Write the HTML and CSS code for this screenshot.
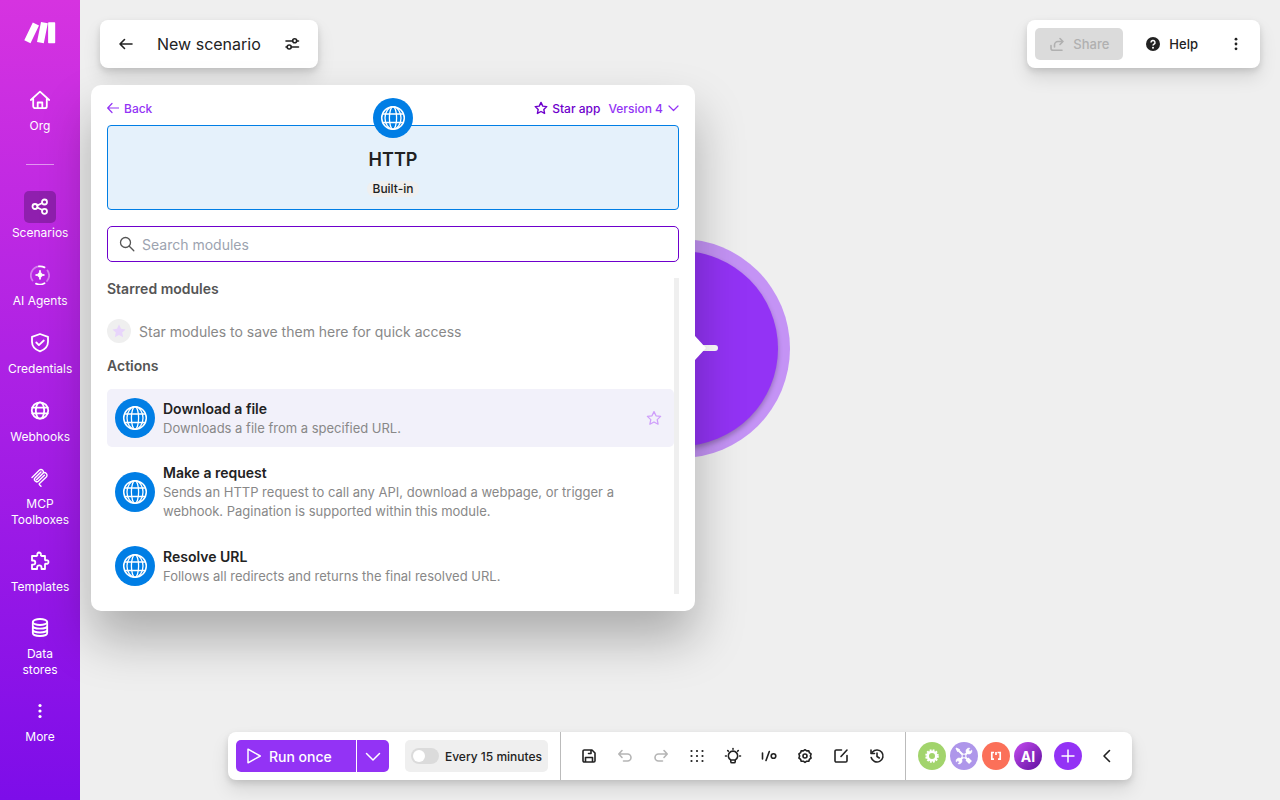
FILE: index.html
```
<!DOCTYPE html>
<html lang="en">
<head>
    <meta charset="UTF-8">
    <meta name="viewport" content="width=device-width, initial-scale=1.0">
    <title>New scenario</title>
    <link rel="stylesheet" href="styles.css">
</head>
<body>
    <!-- shared icons -->
    <svg class="sprite" aria-hidden="true">
        <symbol id="globe" viewBox="0 0 40 40">
            <circle cx="20" cy="20" r="20" fill="#007ee5"/>
            <g fill="none" stroke="#fff" stroke-width="1.3">
                <circle cx="20" cy="20" r="11.3" stroke-width="1.5"/>
                <ellipse cx="20" cy="20" rx="8" ry="11.3"/>
                <ellipse cx="20" cy="20" rx="3.6" ry="11.3"/>
                <path d="M10 16h20M10 24.500h20"/>
            </g>
        </symbol>
        <symbol id="star" viewBox="0 0 16 16">
            <path d="M8 1.6l2 4.2 4.6.6-3.4 3.2.9 4.6L8 12l-4.1 2.2.9-4.6L1.4 6.4 6 5.8z" stroke-linejoin="round"/>
        </symbol>
        <symbol id="dots" viewBox="0 0 16 16">
            <g fill="currentColor" stroke="none"><circle cx="8" cy="2.5" r="1.6"/><circle cx="8" cy="8" r="1.6"/><circle cx="8" cy="13.5" r="1.6"/></g>
        </symbol>
    </svg>

    <nav class="sidebar">
        <a class="logo" href="#" aria-label="Home">
            <svg width="32" height="24" viewBox="0 0 32 24" fill="#fff"><path d="M8.800 1.500L15 4.500 6.500 22.300.300 19.300zM17 1l6.800 1.300-4 20-6.800-1.300zM24.800 1.300h5.700a.7.700 0 0 1 .7.700v19.500a.7.700 0 0 1-.7.700h-5.700a.7.700 0 0 1-.7-.7V2a.7.700 0 0 1 .7-.7z"/></svg>
        </a>
        <a class="nav-item" href="#">
            <span class="nav-icon"><svg class="icon" width="20" height="20" viewBox="0 0 20 20"><path d="M.8 10L10 1.700l9.200 8.300M3.200 8.500v7.700a2 2 0 0 0 2 2h9.600a2 2 0 0 0 2-2V8.500M7.700 18v-5.500h4.600V18"/></svg></span>
            Org
        </a>
        <hr class="nav-line">
        <div class="nav-group">
            <a class="nav-item active" href="#">
                <span class="nav-icon"><svg class="icon" width="18" height="18" viewBox="0 0 18 18"><circle cx="4" cy="8.500" r="2.500"/><circle cx="13.500" cy="4" r="2.500"/><circle cx="13.500" cy="13.300" r="2.500"/><path d="M6.300 7.500l5-2.500M6.300 9.500l5 2.500"/></svg></span>
                Scenarios
            </a>
            <a class="nav-item" href="#">
                <span class="nav-icon"><svg class="icon" width="20" height="20" viewBox="0 0 20 20"><path d="M14.500 2.400A9 9 0 0 0 9 1.400M6 18.600a9 9 0 0 0 8.500-.4"/><path d="M9 1.400A9 9 0 0 0 2.500 15.500M17 16A9 9 0 0 0 17.500 5.500" opacity=".4"/><path d="M10 5.500c.6 2.900 1.600 3.900 4.500 4.500-2.900.6-3.900 1.600-4.500 4.500-.6-2.900-1.600-3.900-4.500-4.500 2.900-.6 3.900-1.600 4.500-4.500z" fill="#fff" stroke-width="1"/></svg></span>
                AI Agents
            </a>
            <a class="nav-item" href="#">
                <span class="nav-icon"><svg class="icon" width="20" height="20" viewBox="0 0 20 20"><path d="M10 1l8 2.800v5c0 4.400-3.200 7.900-8 9.600-4.800-1.700-8-5.200-8-9.600v-5zM6.300 9.500l2.600 2.600 4.900-4.600"/></svg></span>
                Credentials
            </a>
            <a class="nav-item" href="#">
                <span class="nav-icon"><svg class="icon" width="20" height="20" viewBox="0 0 20 20"><circle cx="10" cy="9.500" r="8.200"/><ellipse cx="10" cy="9.500" rx="4.200" ry="8.200"/><path d="M2.300 6.700h15.400M2.300 12.300h15.400"/></svg></span>
                Webhooks
            </a>
        </div>
        <div class="nav-group tight">
            <a class="nav-item" href="#">
                <span class="nav-icon"><svg class="icon thin" width="20" height="20" viewBox="0 0 20 20"><path d="M2 9.500l7.300-7.200a2.300 2.300 0 0 1 3.400 3.300L6.500 11.700M6.800 11.400l6-5.900a2.400 2.400 0 0 1 3.500 3.400L9.500 15.500c-.4.400-.4.800 0 1.200l1.500 1.500M11 3.900L5.200 9.700a2.300 2.300 0 0 0 3.400 3.400L14.400 7.300"/></svg></span>
                MCP Toolboxes
            </a>
            <a class="nav-item" href="#">
                <span class="nav-icon"><svg class="icon" width="20" height="20" viewBox="0 0 20 20"><path d="M2 5h4.500c.8 0 1-.5.800-1.200A1.900 1.900 0 0 1 9 1.500a1.900 1.900 0 0 1 1.900 2.300c-.2.700 0 1.200.8 1.200H15v3.500c0 .8.500 1 1.200.8A1.700 1.700 0 0 1 18.500 11a1.700 1.700 0 0 1-2.300 1.700c-.7-.2-1.200 0-1.200.8V18h-3.500v-1.500a2.200 2.200 0 0 0-4.400 0V18H2v-4.300h1.200a2.100 2.100 0 0 0 0-4.200H2z"/></svg></span>
                Templates
            </a>
            <a class="nav-item" href="#">
                <span class="nav-icon"><svg class="icon" width="20" height="20" viewBox="0 0 20 20"><ellipse cx="10" cy="4" rx="7.200" ry="3"/><path d="M2.800 4v11c0 1.700 3.200 3 7.200 3s7.200-1.300 7.200-3V4M2.800 7.700c0 1.700 3.200 3 7.200 3s7.200-1.300 7.200-3M2.800 11.500c0 1.700 3.200 3 7.200 3s7.200-1.300 7.200-3"/></svg></span>
                Data stores
            </a>
            <a class="nav-item" href="#">
                <span class="nav-icon"><svg width="16" height="16"><use href="#dots"/></svg></span>
                More
            </a>
        </div>
    </nav>

    <main class="canvas">
        <button class="add-module" aria-label="Add module"><span><svg width="76" height="76" viewBox="0 0 76 76" fill="none" stroke="#fff" stroke-width="6" stroke-linecap="round"><path d="M3 37h69M38 3v69"/></svg></span></button>

        <header class="top">
            <div class="bar title-bar">
                <button class="tool" aria-label="Go back"><svg class="icon" width="16" height="16" viewBox="0 0 16 16"><path d="M14 8H2M6.500 3.500L2 8l4.500 4.500"/></svg></button>
                <h1>New scenario</h1>
                <button class="tool" aria-label="Scenario options"><svg class="icon" width="16" height="16" viewBox="0 0 16 16"><path d="M2 5h6.500M13 5h1.500M2 11h1M7.500 11h7"/><circle cx="10.700" cy="4.800" r="2"/><circle cx="5.200" cy="11" r="2"/></svg></button>
            </div>
            <div class="bar">
                <button class="share" disabled><svg class="icon" width="16" height="16" viewBox="0 0 16 16"><path d="M5.500 11V9a3.500 3.500 0 0 1 3.500-3.500h5M11 2.500l3 3-3 3M2 9.500v2.800a2 2 0 0 0 2 2h9"/></svg>Share</button>
                <button class="help"><svg width="16" height="16" viewBox="0 0 16 16"><circle cx="8" cy="8" r="7" fill="#222"/><path d="M6 6.500a2 2 0 1 1 2.800 1.800c-.6.300-.8.500-.8 1.200" fill="none" stroke="#fff" stroke-width="1.500"/><circle cx="8" cy="11.700" r="1" fill="#fff"/></svg>Help</button>
                <button class="tool narrow" aria-label="More"><svg width="14" height="14"><use href="#dots"/></svg></button>
            </div>
        </header>

        <section class="panel">
            <div class="panel-top">
                <button class="link"><svg class="icon thin" width="12" height="12" viewBox="0 0 12 12"><path d="M11.500 6H1M5 1.500L.7 6 5 10.500"/></svg>Back</button>
                <button class="link star-app"><svg class="icon" width="14" height="14"><use href="#star"/></svg>Star app</button>
                <button class="link">Version 4<svg class="icon thin" width="12" height="12" viewBox="0 0 12 12"><path d="M2 4l4.500 4.500L11 4"/></svg></button>
            </div>
            <div class="app-card">
                <svg class="app-logo" width="40" height="40"><use href="#globe"/></svg>
                <h2>HTTP</h2>
                <span class="badge">Built-in</span>
            </div>
            <label class="search">
                <svg class="icon" width="16" height="16" viewBox="0 0 16 16"><circle cx="6.500" cy="6.500" r="5"/><path d="M10.300 10.300l4.500 4.500"/></svg>
                <input type="text" placeholder="Search modules" aria-label="Search modules">
            </label>
            <div class="modules">
                <h3>Starred modules</h3>
                <p class="empty"><span class="empty-star"><svg width="16" height="16"><use href="#star"/></svg></span>Star modules to save them here for quick access</p>
                <h3>Actions</h3>
                <ul>
                    <li class="selected">
                        <svg width="40" height="40"><use href="#globe"/></svg>
                        <div><h4>Download a file</h4><p>Downloads a file from a specified URL.</p></div>
                        <button class="star-btn" aria-label="Star module"><svg class="icon" width="16" height="16"><use href="#star"/></svg></button>
                    </li>
                    <li>
                        <svg width="40" height="40"><use href="#globe"/></svg>
                        <div><h4>Make a request</h4><p>Sends an HTTP request to call any API, download a webpage, or trigger a webhook. Pagination is supported within this module.</p></div>
                    </li>
                    <li>
                        <svg width="40" height="40"><use href="#globe"/></svg>
                        <div><h4>Resolve URL</h4><p>Follows all redirects and returns the final resolved URL.</p></div>
                    </li>
                </ul>
            </div>
        </section>

        <footer class="bar bottom">
            <div class="run-group">
                <button class="run"><svg class="icon" width="16" height="16" viewBox="0 0 16 16"><path d="M2 1.200v13.600L14.300 8z"/></svg>Run once</button>
                <button class="run-menu" aria-label="Run options"><svg class="icon" width="16" height="16" viewBox="0 0 16 16"><path d="M1.500 5.500L8 12l6.500-6.500"/></svg></button>
                <label class="schedule"><input type="checkbox">Every 15 minutes</label>
            </div>
            <div class="tools">
                <button class="tool" aria-label="Save"><svg class="icon" width="16" height="16" viewBox="0 0 16 16"><path d="M3.300 2H11l3 3v7.700a1.300 1.300 0 0 1-1.300 1.300H3.300A1.300 1.300 0 0 1 2 12.700V3.300A1.300 1.300 0 0 1 3.300 2zM4.500 14V9.500h7V14M10 2v3.500H7.500"/></svg></button>
                <button class="tool" aria-label="Undo" disabled><svg class="icon" width="16" height="16" viewBox="0 0 16 16"><path d="M2 6h8.500a3.500 3.500 0 0 1 0 7H6.500M5 2.500L1.800 6 5 9.500"/></svg></button>
                <button class="tool" aria-label="Redo" disabled><svg class="icon" width="16" height="16" viewBox="0 0 16 16"><path d="M14 6H5.500a3.500 3.500 0 0 0 0 7h4M11 2.500L14.200 6 11 9.500"/></svg></button>
                <button class="tool" aria-label="Align"><svg class="icon grid-dots" width="16" height="16" viewBox="0 0 16 16"><path d="M2.500 3h0M8 3h0M13.500 3h0M2.500 8h0M8 8h0M13.500 8h0M2.500 13h0M8 13h0M13.500 13h0"/></svg></button>
                <button class="tool" aria-label="Explain flow"><svg class="icon" width="18" height="18" viewBox="0 0 18 18"><path d="M6.800 13a4.700 4.700 0 1 1 4.400 0v1.800a1 1 0 0 1-1 1H7.800a1 1 0 0 1-1-1zM6.800 13h4.400M9 1.500v.8M3.700 3.500l.6.600M14.300 3.500l-.6.600M1.500 9h.9M15.600 9h.9"/></svg></button>
                <button class="tool" aria-label="Inputs and outputs"><svg class="icon" width="16" height="16" viewBox="0 0 16 16"><path d="M1.500 5v6M8.300 3.500L5 12.500"/><circle cx="12.500" cy="8" r="2.300"/></svg></button>
                <button class="tool" aria-label="Settings"><svg class="icon" width="16" height="16" viewBox="0 0 16 16"><path d="M8 1.700l1.700 1.200 2.100-.2.600 2 1.700 1.200-.7 2.100.7 2-1.700 1.300-.6 2-2.100-.1L8 14.400l-1.700-1.200-2.100.1-.6-2L1.900 10l.7-2-.7-2.100 1.700-1.200.6-2 2.100.2z"/><circle cx="8" cy="8" r="2"/></svg></button>
                <button class="tool" aria-label="Notes"><svg class="icon" width="16" height="16" viewBox="0 0 16 16"><path d="M8.500 2H3.300A1.300 1.300 0 0 0 2 3.300v9.400A1.300 1.300 0 0 0 3.300 14h9.400a1.300 1.300 0 0 0 1.300-1.300V7.500M8 8.500L14 2"/></svg></button>
                <button class="tool" aria-label="History"><svg class="icon" width="16" height="16" viewBox="0 0 16 16"><path d="M2.200 9.500A6 6 0 1 0 3.500 4M2 2v3.500h3.500M8 5v3.500l2.300 1.500"/></svg></button>
            </div>
            <div class="apps">
                <button class="app green" aria-label="Flow control"><svg width="28" height="28" viewBox="0 0 28 28" fill="none" stroke="#fff"><circle cx="14" cy="14" r="4.300" stroke-width="2.600"/><circle cx="14" cy="14" r="5.900" stroke-width="1.800" stroke-dasharray="1.850 1.240"/></svg></button>
                <button class="app lilac" aria-label="Tools"><svg width="28" height="28" viewBox="0 0 28 28" fill="none" stroke="#fff"><path d="M8 8l12 12M19.500 8.500L8.500 19.500" stroke-width="2"/><path d="M17 17l3.500 3.500" stroke-width="4"/><path d="M20 6.300a3 3 0 1 0 1.700 1.700L19.500 10 18 8.500zM8 21.700a3 3 0 1 0-1.700-1.700L8.500 18 10 19.500z" fill="#fff" stroke-width=".5"/><path d="M6 6l3.500 1.500-2 2z" fill="#fff" stroke-width="1"/><circle cx="14" cy="14" r="2" fill="#ae96ea" stroke-width="1"/></svg></button>
                <button class="app coral" aria-label="Text parser"><svg width="28" height="28" viewBox="0 0 28 28" fill="none" stroke="#fff" stroke-width="1.700"><path d="M12 10.500H9.800v6.700H12M15.500 10.500h2.700v6.700H16M14 10v3"/></svg></button>
                <button class="app ai">AI</button>
                <button class="app plus" aria-label="Add app"><svg width="16" height="16" viewBox="0 0 16 16" stroke="#fff" stroke-width="1.500"><path d="M8 1.500v13M1.500 8h13"/></svg></button>
                <button class="tool" aria-label="Collapse"><svg class="icon" width="16" height="16" viewBox="0 0 16 16"><path d="M10.500 2.500L5 8l5.500 5.500"/></svg></button>
            </div>
        </footer>
    </main>
</body>
</html>
```
FILE: styles.css
```
* {
    box-sizing: border-box;
}

body {
    margin: 0;
    min-height: 100vh;
    display: flex;
    font-family: Inter, "Liberation Sans", sans-serif;
    font-size: 13px;
    color: #222;
    background-color: #efefef;
}

h1, h2, h3, h4, p, ul {
    margin: 0;
    padding: 0;
}

ul {
    list-style: none;
}

button {
    display: flex;
    align-items: center;
    justify-content: center;
    padding: 0;
    border: none;
    background: none;
    color: inherit;
    font: inherit;
    cursor: pointer;
}

svg {
    flex-shrink: 0;
}

.sprite {
    position: absolute;
    width: 0;
    height: 0;
}

.icon {
    fill: none;
    stroke: currentColor;
    stroke-width: 1.6;
    stroke-linecap: round;
    stroke-linejoin: round;
}

.thin {
    stroke-width: 1.2;
}

/* sidebar */
.sidebar {
    width: 80px;
    flex-shrink: 0;
    padding-top: 21px;
    background: linear-gradient(#d633e0, #7d0de9);
}

.logo {
    display: flex;
    justify-content: center;
    height: 63px;
}

.nav-item {
    display: flex;
    flex-direction: column;
    align-items: center;
    gap: 2px;
    padding: 0 8px;
    color: #fff;
    font-size: 12px;
    line-height: 16px;
    text-align: center;
    text-decoration: none;
}

.nav-icon {
    display: flex;
    align-items: center;
    justify-content: center;
    width: 32px;
    height: 32px;
    border-radius: 5px;
}

.active .nav-icon {
    background-color: #8f1fae;
}

.sidebar .icon {
    stroke-width: 1.8;
}

.sidebar .thin {
    stroke-width: 1.4;
}

.nav-line {
    width: 28px;
    margin: 30px auto 26px;
    border: none;
    border-top: 1px solid rgba(255, 255, 255, 0.5);
}

.nav-group {
    display: grid;
    gap: 18px;
}

.tight {
    gap: 17px;
    margin-top: 17px;
}

/* canvas */
.canvas {
    position: relative;
    flex: 1;
    display: flex;
    flex-direction: column;
    justify-content: space-between;
    align-items: center;
    padding: 20px;
}

.top {
    display: flex;
    justify-content: space-between;
    width: 100%;
}

.bar {
    display: flex;
    align-items: center;
    height: 48px;
    padding: 8px;
    border-radius: 8px;
    background-color: #fff;
    box-shadow: 0 3px 6px rgba(0, 0, 0, 0.12), 0 10px 18px rgba(0, 0, 0, 0.1);
}

.tool {
    width: 36px;
    height: 32px;
}

.narrow {
    width: 32px;
}

.tool:disabled {
    color: #b5b5b5;
}

.title-bar h1 {
    padding: 0 13px;
    font-size: 16px;
    font-weight: 400;
}

.share,
.help {
    gap: 8px;
    height: 32px;
    font-weight: 500;
}

.share {
    width: 88px;
    border-radius: 5px;
    background-color: #dbdbdb;
    color: #b0b0b0;
}

.help {
    padding: 0 22px;
}

/* big round module in the middle */
.add-module {
    position: absolute;
    top: 239px;
    left: calc(50% - 109px);
    width: 219px;
    height: 219px;
    border-radius: 50%;
    background-color: #c493f5;
}

.add-module span {
    display: flex;
    align-items: center;
    justify-content: center;
    width: 195px;
    height: 195px;
    border-radius: 50%;
    background-color: #9333f5;
    box-shadow: 0 3px 5px rgba(0, 0, 0, 0.25);
}

/* module picker */
.panel {
    position: absolute;
    top: 85px;
    left: 11px;
    width: 604px;
    padding: 16px 16px 17px;
    border-radius: 10px;
    background-color: #fff;
    box-shadow: 0 28px 50px rgba(0, 0, 0, 0.28);
}

.panel::after {
    content: "";
    position: absolute;
    top: 251px;
    left: 100%;
    border: 12px solid transparent;
    border-left: 11px solid #fff;
    border-right: none;
}

.panel-top {
    display: flex;
    gap: 8px;
    height: 24px;
    align-items: flex-start;
}

.link {
    gap: 5px;
    height: 14px;
    color: #9333f5;
    font-size: 12px;
    font-weight: 500;
}

.star-app {
    gap: 4px;
    margin-left: auto;
    color: #6e00cc;
}

.link:last-child {
    gap: 4px;
}

.app-card {
    position: relative;
    display: flex;
    flex-direction: column;
    align-items: center;
    height: 85px;
    padding-top: 22px;
    border: 1px solid #007ee5;
    border-radius: 4px;
    background-color: #e5f1fb;
}

.app-logo {
    position: absolute;
    top: -28px;
}

.app-card h2 {
    font-size: 18px;
    font-weight: 600;
    line-height: 24px;
}

.badge {
    margin-top: 9px;
    padding: 0 6px;
    border-radius: 8px;
    background-color: #efefef;
    font-size: 12px;
    font-weight: 500;
    line-height: 16px;
}

.search {
    display: flex;
    align-items: center;
    gap: 7px;
    height: 36px;
    margin: 16px 0;
    padding: 0 11px;
    border: 1px solid #6e00cc;
    border-radius: 5px;
    color: #555;
}

.search .icon {
    stroke-width: 1.3;
}

.search input {
    flex: 1;
    border: none;
    outline: none;
    padding: 0;
    font: inherit;
    font-size: 14px;
}

.search input::placeholder {
    color: #9ca3af;
}

.modules {
    max-height: 316px;
    overflow: hidden;
    border-right: 5px solid #efefef;
}

.modules h3 {
    color: #555;
    font-size: 14px;
    font-weight: 600;
    line-height: 22px;
}

.empty {
    display: flex;
    align-items: center;
    gap: 8px;
    margin: 19px 0 12px;
    color: #888;
    font-size: 14px;
}

.empty-star {
    display: flex;
    align-items: center;
    justify-content: center;
    width: 24px;
    height: 24px;
    border-radius: 50%;
    background-color: #efefef;
    fill: #e8d5fb;
}

.modules ul {
    display: grid;
    gap: 7px;
    margin-top: 12px;
}

.modules li {
    display: flex;
    align-items: center;
    gap: 8px;
    padding: 9px 8px;
    border-radius: 5px;
}

.modules li div {
    flex: 1;
    max-width: 460px;
}

.modules .selected {
    background-color: #f2f1fa;
}

.modules h4 {
    font-size: 14px;
    font-weight: 600;
    line-height: 20px;
}

.modules li p {
    color: #888;
    line-height: 19px;
}

.star-btn {
    width: 24px;
    height: 24px;
    margin-left: auto;
    color: #cf9ffa;
}

.star-btn .icon {
    stroke-width: 1.3;
}

/* bottom toolbar */
.bottom {
    padding: 0;
}

.run-group,
.tools,
.apps {
    display: flex;
    align-items: center;
    height: 100%;
}

.run-group {
    padding: 0 12px 0 8px;
}

.run,
.run-menu {
    height: 32px;
    background-color: #9333f5;
    color: #fff;
}

.run {
    justify-content: flex-start;
    gap: 7px;
    width: 120px;
    padding-left: 10px;
    border-radius: 5px 0 0 5px;
    font-size: 14px;
    font-weight: 500;
}

.run-menu {
    width: 32px;
    margin-left: 1px;
    border-radius: 0 5px 5px 0;
}

.run-group .icon {
    stroke-width: 1.5;
}

.schedule {
    display: flex;
    align-items: center;
    gap: 6px;
    height: 32px;
    margin-left: 16px;
    padding: 0 6px;
    border-radius: 5px;
    background-color: #efefef;
    font-size: 12px;
    font-weight: 500;
}

.schedule input {
    appearance: none;
    display: flex;
    width: 28px;
    height: 16px;
    margin: 0;
    padding: 2px;
    border-radius: 8px;
    background-color: #dbdbdb;
}

.schedule input::before {
    content: "";
    width: 12px;
    height: 12px;
    border-radius: 50%;
    background-color: #fff;
}

.schedule input:checked {
    justify-content: flex-end;
    background-color: #9333f5;
}

.tools {
    padding: 0 10px;
    border-left: 1px solid #bbb;
    border-right: 1px solid #bbb;
}

.grid-dots {
    stroke-width: 2.2;
}

.apps {
    gap: 4px;
    padding: 0 7px 0 12px;
}

.app {
    width: 28px;
    height: 28px;
    border-radius: 50%;
}

.green {
    background-color: #a2d46c;
}

.lilac {
    background-color: #ae96ea;
}

.coral {
    background-color: #fb7059;
}

.ai {
    background: linear-gradient(135deg, #c54cf0, #5f0f9e);
    color: #fff;
    font-size: 14px;
    font-weight: 700;
}

.plus {
    margin: 0 3px 0 8px;
    background-color: #9333f5;
}
```
